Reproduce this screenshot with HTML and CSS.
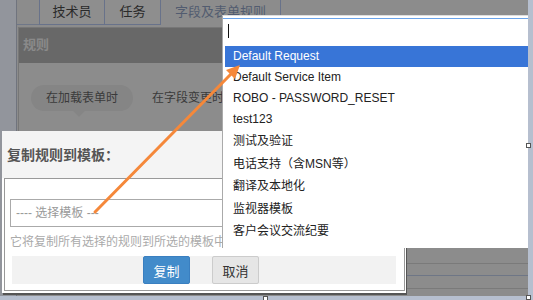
FILE: index.html
```html
<!DOCTYPE html>
<html lang="zh-CN">
<head>
    <meta charset="UTF-8">
    <title>复制规则到模板</title>
    <link rel="stylesheet" href="styles.css">
</head>
<body>
<div class="screen">
    <div class="page">
        <div class="side"></div>
        <div class="main">
            <div class="tabs">
                <span class="tab">技术员</span>
                <span class="tab">任务</span>
                <span class="tab active">字段及表单规则</span>
            </div>
            <div class="panel">
                <div class="panel-head">规则</div>
                <div class="panel-body">
                    <span class="bubble">在加载表单时</span>
                    <span class="bubble plain">在字段变更时</span>
                </div>
                <div class="rows">
                    <div class="row r1"></div>
                    <div class="row r2"></div>
                    <div class="row r3"></div>
                </div>
            </div>
        </div>
    </div>

    <div class="dialog">
        <div class="dialog-title">复制规则到模板：</div>
        <div class="dialog-body">
            <div class="select">---- 选择模板 ---</div>
            <p class="help">它将复制所有选择的规则到所选的模板中</p>
            <div class="footer">
                <button class="btn primary">复制</button>
                <button class="btn">取消</button>
            </div>
        </div>
    </div>

    <div class="dropdown">
        <div class="search"><span class="caret"></span></div>
        <ul class="options">
            <li class="selected">Default Request</li>
            <li>Default Service Item</li>
            <li>ROBO - PASSWORD_RESET</li>
            <li>test123</li>
            <li class="zh">测试及验证</li>
            <li class="zh">电话支持（含MSN等）</li>
            <li class="zh">翻译及本地化</li>
            <li class="zh">监视器模板</li>
            <li class="zh">客户会议交流纪要</li>
        </ul>
    </div>

    <svg class="arrow" width="533" height="300" viewBox="0 0 533 300">
        <line x1="95" y1="212" x2="231" y2="74" stroke="#f5883a" stroke-width="3" stroke-linecap="round"/>
        <polygon points="240,65 235,79 226,70" fill="#f5883a"/>
    </svg>

    <span class="handle h1"></span>
    <span class="handle h2"></span>
    <span class="handle h3"></span>
</div>
</body>
</html>
```

FILE: styles.css
```css
* {
    box-sizing: border-box;
}
body {
    margin: 0;
    background: #b6bfcf;
    font-family: "Liberation Sans", "Noto Sans CJK SC", sans-serif;
    font-size: 12px;
    color: #222;
}
.screen {
    position: relative;
    width: 533px;
    height: 300px;
    overflow: hidden;
}
.page {
    display: flex;
    width: 528px;
    height: 296px;
    background: #8c8c8c;
}
.side {
    width: 17px;
    background: #92959c;
    border-right: 1px solid #70747e;
}
.main {
    flex: 1;
}
.tabs {
    display: flex;
    height: 25px;
    padding-left: 22px;
    border-bottom: 1px solid #6f7788;
}
.tab {
    width: 66px;
    height: 25px;
    line-height: 24px;
    text-align: center;
    font-size: 13px;
    color: #2a2a2a;
    border: 1px solid #68728a;
    border-top: none;
    background: #8e8e8e;
}
.tab + .tab {
    width: 56px;
    border-left: none;
}
.tab.active {
    width: 120px;
    color: #525c70;
    background: #8c8c8c;
    border-bottom-color: #8c8c8c;
    height: 26px;
}
.panel {
    margin: 2px 0 0 1px;
    border-left: 1px solid #777;
    border-top: 1px solid #777;
}
.panel-head {
    height: 35px;
    line-height: 34px;
    padding-left: 4px;
    background: #686868;
    color: #8a8a8a;
    font-weight: bold;
    font-size: 13px;
}
.panel-body {
    padding: 22px 0 0 12px;
    display: flex;
    gap: 4px;
}
.bubble {
    position: relative;
    height: 26px;
    line-height: 26px;
    padding: 0 15px;
    border-radius: 13px;
    background: #858585;
    color: #3a3a3a;
}
.bubble::after {
    content: "";
    position: absolute;
    left: 42px;
    bottom: -6px;
    border: 6px solid transparent;
    border-bottom: none;
    border-top-color: #858585;
}
.bubble.plain {
    background: none;
}
.bubble.plain::after {
    display: none;
}
.rows {
    margin-top: 140px;
}
.row {
    height: 12px;
    border-bottom: 1px solid #7a7a7a;
}
.row.r1 {
    height: 13px;
}
.row.r2 {
    border-bottom-color: #6e7686;
}
.row.r3 {
    height: 13px;
}

/* dialog */
.dialog {
    position: absolute;
    left: 2px;
    top: 131px;
    width: 404px;
    height: 162px;
    background: #fff;
    box-shadow: 1px 2px 0 #555;
}
.dialog-title {
    height: 47px;
    line-height: 48px;
    padding-left: 5px;
    background: #f4f4f4;
    color: #555;
    font-size: 14px;
    font-weight: bold;
}
.dialog-body {
    margin: 0 1px 0 2px;
    height: 113px;
    border: 1px solid #999;
    padding: 20px 6px 0 5px;
}
.select {
    height: 28px;
    line-height: 26px;
    padding-left: 5px;
    border: 1px solid #aaa;
    color: #999;
}
.help {
    margin: 7px 0 0;
    line-height: 16px;
    color: #aaa;
}
.footer {
    display: flex;
    gap: 22px;
    margin: 6px 2px 0 2px;
    padding-left: 131px;
    height: 28px;
    background: #f2f2f2;
}
.btn {
    width: 47px;
    height: 28px;
    padding: 0;
    font-family: inherit;
    font-size: 13px;
    color: #333;
    border: 1px solid #ccc;
    border-radius: 2px;
    background: #e6e6e6;
}
.btn.primary {
    color: #fff;
    border-color: #3a7fc0;
    background: #428bca;
}

/* dropdown */
.dropdown {
    position: absolute;
    left: 222px;
    top: 15px;
    width: 306px;
    height: 233px;
    background: #fff;
    border-left: 1px solid #aaa;
    border-top: 1px solid #ddd;
}
.search {
    height: 28px;
    margin-top: 2px;
    border-top: 1px solid #6aa3ea;
    padding: 5px 0 0 5px;
}
.caret {
    display: block;
    width: 1px;
    height: 14px;
    background: #111;
}
.options {
    list-style: none;
    margin: 0 0 0 2px;
    padding: 0;
}
.options li {
    line-height: 21px;
    padding-left: 8px;
    color: #222;
}
.options li.zh {
    line-height: 22.5px;
}
.options li.selected {
    background: #3875d7;
    color: #fff;
}

.arrow {
    position: absolute;
    left: 0;
    top: 0;
}
.handle {
    position: absolute;
    width: 5px;
    height: 5px;
    background: #fff;
    border: 1px solid #555;
}
.h1 {
    left: 526px;
    top: 143px;
}
.h2 {
    left: 263px;
    top: 296px;
}
.h3 {
    left: 526px;
    top: 295px;
}
```
